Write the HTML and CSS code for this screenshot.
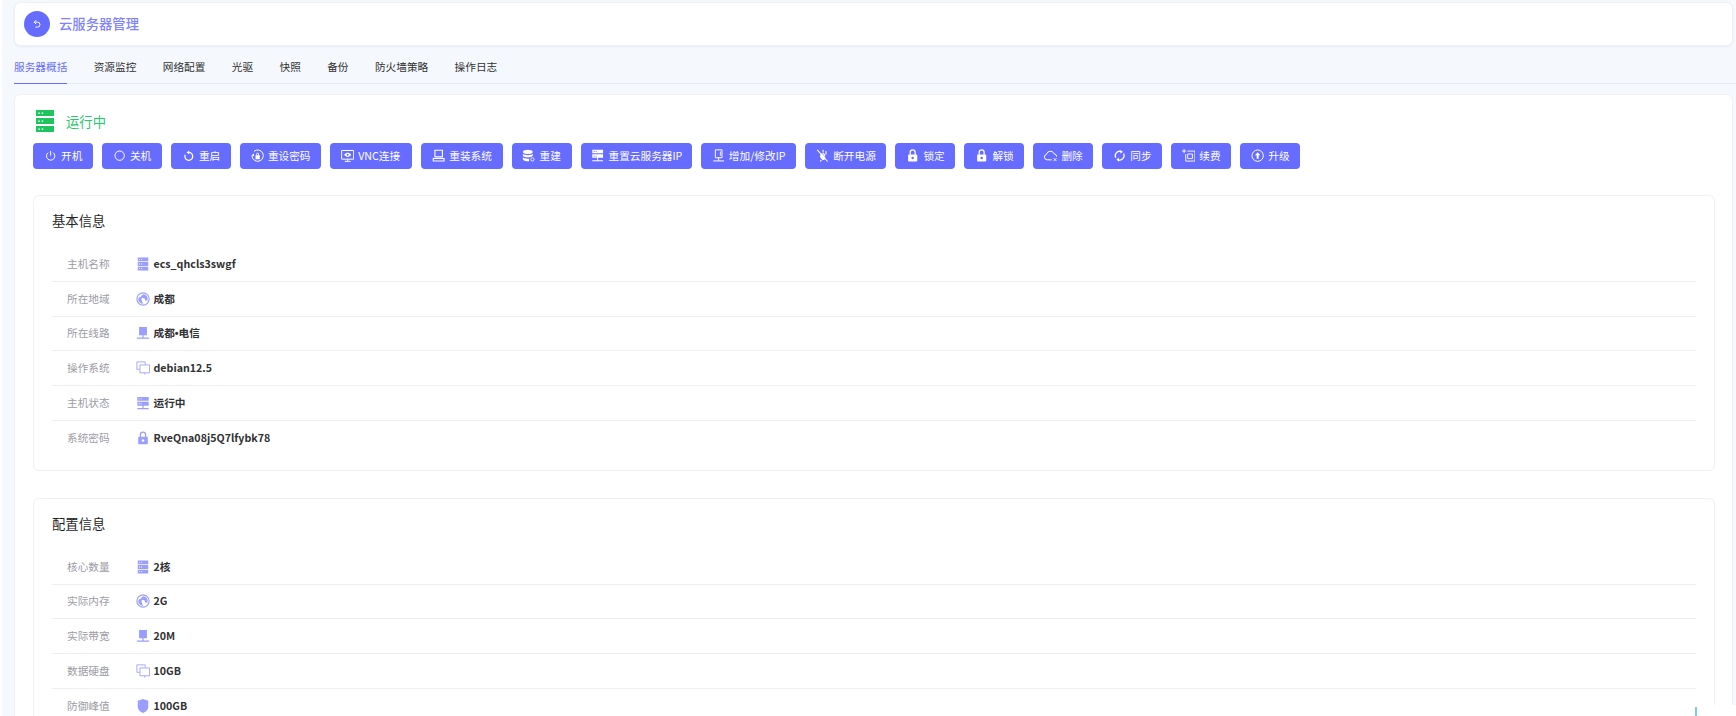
FILE: index.html
```html
<!DOCTYPE html>
<html lang="zh-CN">
<head>
    <meta charset="UTF-8">
    <meta name="viewport" content="width=device-width, initial-scale=1.0">
    <title>云服务器管理</title>
    <link rel="stylesheet" href="styles.css">
</head>
<body>
    <!-- icon sprite -->
    <svg class="sprite" xmlns="http://www.w3.org/2000/svg">
        <symbol id="i-back" viewBox="0 0 16 16"><path d="M6.5 2 3.5 5l3 3M3.5 5h5.2a4 4 0 0 1 0 8H5.5" fill="none" stroke="currentColor" stroke-width="1.6"/></symbol>
        <symbol id="i-power" viewBox="0 0 16 16"><path d="M5 4.4a5 5 0 1 0 6 0M8 2.4V8" fill="none" stroke="currentColor" stroke-width="1.2"/></symbol>
        <symbol id="i-circle" viewBox="0 0 16 16"><circle cx="8" cy="8" r="5.6" fill="none" stroke="currentColor" stroke-width="1.2"/></symbol>
        <symbol id="i-restart" viewBox="0 0 16 16"><path d="M8.4 4.2a4.7 4.7 0 1 1-4.5 2.7" fill="none" stroke="currentColor" stroke-width="1.5"/><path d="M8.6 1.8v4.6L5.4 4.2z" fill="currentColor"/></symbol>
        <symbol id="i-resetpw" viewBox="0 0 16 16"><path d="M3.6 2.8A6.8 6.8 0 1 1 1.2 8" fill="none" stroke="currentColor" stroke-width="1.2"/><path d="M.6 7.8 3.6 5.2v3.6z" fill="currentColor"/><path d="M5.4 7.5h5.2v4.7H5.4zM6.4 7.5V6a1.6 1.6 0 0 1 3.2 0v1.5h-.9V6a.7.7 0 0 0-1.4 0v1.5z" fill="currentColor"/></symbol>
        <symbol id="i-vnc" viewBox="0 0 16 16"><path d="M.8 1.8h14.400v10.400H.8zM8 12.200v2.400M4.500 14.800h7" fill="none" stroke="currentColor" stroke-width="1.2"/><path d="M3.800 7C5 5.200 6.400 4.500 8 4.500S11 5.200 12.200 7C11 8.800 9.600 9.500 8 9.500S5 8.800 3.800 7z" fill="currentColor"/><circle cx="8" cy="7" r="1.200" fill="#666cff"/></symbol>
        <symbol id="i-laptop" viewBox="0 0 16 16"><path d="M3.500 1.500h9v8h-9zM1.500 11.500h13v3h-13z" fill="none" stroke="currentColor" stroke-width="1.300"/></symbol>
        <symbol id="i-db" viewBox="0 0 16 16"><path d="M1 3.500C1 2 4 1 7 1s6 1 6 2.500S10 6 7 6 1 5 1 3.500zM1 5.700C2.200 7 4.500 7.400 7 7.400s4.800-.4 6-1.700v2.100C13 9 10 10 7 10S1 9 1 7.800zM1 10c1.200 1.300 3.500 1.700 6 1.700.5 0 1 0 1.500-.1v3.100L7 14.800c-3 0-6-1-6-2.500z" fill="currentColor"/><circle cx="12.500" cy="12.500" r="2" fill="none" stroke="currentColor" stroke-width="1"/></symbol>
        <symbol id="i-serverip" viewBox="0 0 16 16"><path d="M1.500 1h13v4.200h-13zM1.500 6.400h13v4.200h-13zM7.400 10.600h1.200v3h5.900v1.200h-13v-1.200h5.900z" fill="currentColor"/><path d="M3 2.600h1.400v1H3zM5.500 2.600h1.400v1H5.500zM3 8h1.400v1H3zM5.500 8h1.400v1H5.500z" fill="#666cff"/></symbol>
        <symbol id="i-addip" viewBox="0 0 16 16"><path d="M4 1h8v9.500H4zM8 10.500v3.300M1.500 14.300h13" fill="none" stroke="currentColor" stroke-width="1.200"/><path d="M9.500 3h1v5h-1z" fill="currentColor"/></symbol>
        <symbol id="i-unplug" viewBox="0 0 16 16"><path d="M5.500 5.500 4.800 10l3.400 3.400 3-1.200-.2-5.500-2-2z" fill="currentColor"/><path d="M1.500 1 14 15M8.500 .8v3.500M12 2.500v4M6.500 13 5 15" fill="none" stroke="currentColor" stroke-width="1.300"/><path d="M3 .2 15.700 14.800" stroke="#666cff" stroke-width=".7"/></symbol>
        <symbol id="i-lock" viewBox="0 0 16 16"><path fill-rule="evenodd" d="M3.500 6.500h9a1 1 0 0 1 1 1V14a1 1 0 0 1-1 1h-9a1 1 0 0 1-1-1V7.500a1 1 0 0 1 1-1zM8 9.300a1.500 1.500 0 1 0 0 3 1.500 1.500 0 0 0 0-3z" fill="currentColor"/><path d="M5 6.800V4.200a3 3 0 0 1 6 0v2.600" fill="none" stroke="currentColor" stroke-width="1.500"/></symbol>
        <symbol id="i-cloud" viewBox="0 0 16 16"><path d="M9.200 13H3.800A3.300 3.300 0 0 1 3 6.500 4.800 4.800 0 0 1 12.200 5.800a3.400 3.400 0 0 1 3 3.400" fill="none" stroke="currentColor" stroke-width="1.200"/><path d="m11.500 11 3.500 3.500m0-3.500-3.500 3.500" fill="none" stroke="currentColor" stroke-width="1.100"/></symbol>
        <symbol id="i-sync" viewBox="0 0 16 16"><path d="M3.300 10.500A5.300 5.300 0 0 1 9.600 3M12.700 5.500A5.300 5.300 0 0 1 6.400 13" fill="none" stroke="currentColor" stroke-width="1.500"/><path d="M8.800 .8 12 3.500 8.800 5.500zM7.200 10.500 4 12.500l3.200 2.700z" fill="currentColor"/></symbol>
        <symbol id="i-renew" viewBox="0 0 16 16"><path d="M6.500 2.500h9v12h-11V6M6.800 6h5.700v5.500H6.800zM2.500 0v5M0 2.500h5" fill="none" stroke="currentColor" stroke-width="1.100"/></symbol>
        <symbol id="i-up" viewBox="0 0 16 16"><circle cx="8" cy="8" r="6.800" fill="none" stroke="currentColor" stroke-width="1.200"/><path d="M8 3.800 11.200 7.600H9.200v4H6.800v-4H4.800z" fill="currentColor"/></symbol>

        <symbol id="r-server" viewBox="0 0 16 16"><path fill-rule="evenodd" d="M2 .5h12v4.300H2zM2 5.850h12v4.300H2zM2 11.200h12v4.300H2zM3.500 2.200v1h1.200v-1zM5.800 2.200v1H7v-1zM3.500 7.500v1h1.200v-1zM5.800 7.500v1H7v-1zM3.500 12.800v1h1.200v-1zM5.800 12.800v1H7v-1z" fill="currentColor"/></symbol>
        <symbol id="r-globe" viewBox="0 0 16 16"><circle cx="8" cy="8" r="7" fill="none" stroke="currentColor" stroke-width="1.300"/><path d="M8 2.600a5.400 5.400 0 0 1 5 7.400l-2.500-.4-.6-2.300-2.600-.8-1.300 1.600 1 2.500 1 3A5.400 5.400 0 0 1 3 6.200L5 5.800 6.800 3.600z" fill="currentColor"/></symbol>
        <symbol id="r-net" viewBox="0 0 16 16"><path d="M3.500 1h9v9.500h-9zM7.300 10.500h1.400v2.700H15v1.400H1v-1.400h6.300z" fill="currentColor"/></symbol>
        <symbol id="r-os" viewBox="0 0 16 16"><path d="M10.500 4V1H1v8.500h3" fill="none" stroke="currentColor" stroke-width="1"/><path d="M4.500 4.500h11v9h-11zM10 13.500v2" fill="none" stroke="currentColor" stroke-width="1"/></symbol>
        <symbol id="r-state" viewBox="0 0 16 16"><path fill-rule="evenodd" d="M1.500 1h13v4.500h-13zM1.500 6.600h13v4.500h-13zM7.300 11.100h1.400v2.500h5.800V15h-13v-1.400h5.800zM3 2.800v1h1.200v-1zM5.300 2.800v1h1.200v-1zM3 8.400v1h1.200v-1zM5.300 8.400v1h1.200v-1z" fill="currentColor"/></symbol>
        <symbol id="r-shield" viewBox="0 0 16 16"><path d="M8 0 14 2v6.500c0 3.500-2.600 6-6 7.500-3.400-1.500-6-4-6-7.500V2z" fill="currentColor"/></symbol>
    </svg>

    <div class="page">
        <div class="header">
            <span class="back"><svg class="back-icon"><use href="#i-back"/></svg></span>
            <span class="header-title">云服务器管理</span>
        </div>

        <div class="tabs">
            <a class="tab active">服务器概括</a>
            <a class="tab">资源监控</a>
            <a class="tab">网络配置</a>
            <a class="tab">光驱</a>
            <a class="tab">快照</a>
            <a class="tab">备份</a>
            <a class="tab">防火墙策略</a>
            <a class="tab">操作日志</a>
        </div>

        <div class="content">
            <div class="status">
                <svg class="status-icon" viewBox="0 0 16 22" preserveAspectRatio="none">
                    <path fill-rule="evenodd" d="M0 0h16v6H0zM0 8h16v6H0zM0 16h16v6H0zM2 2.400v1.400h1.400V2.400zM5 2.400v1.400h1.400V2.400zM2 10.400v1.400h1.400v-1.400zM5 10.400v1.400h1.400v-1.400zM2 18.400v1.400h1.400v-1.400zM5 18.400v1.400h1.400v-1.400z"/>
                </svg>
                <span class="status-text">运行中</span>
            </div>

            <div class="actions">
                <button class="btn"><svg><use href="#i-power"/></svg>开机</button>
                <button class="btn"><svg><use href="#i-circle"/></svg>关机</button>
                <button class="btn"><svg><use href="#i-restart"/></svg>重启</button>
                <button class="btn"><svg><use href="#i-resetpw"/></svg>重设密码</button>
                <button class="btn btn-vnc"><svg><use href="#i-vnc"/></svg>VNC连接</button>
                <button class="btn"><svg><use href="#i-laptop"/></svg>重装系统</button>
                <button class="btn"><svg><use href="#i-db"/></svg>重建</button>
                <button class="btn btn-ip"><svg><use href="#i-serverip"/></svg>重置云服务器IP</button>
                <button class="btn"><svg><use href="#i-addip"/></svg>增加/修改IP</button>
                <button class="btn"><svg><use href="#i-unplug"/></svg>断开电源</button>
                <button class="btn"><svg><use href="#i-lock"/></svg>锁定</button>
                <button class="btn"><svg><use href="#i-lock"/></svg>解锁</button>
                <button class="btn"><svg><use href="#i-cloud"/></svg>删除</button>
                <button class="btn"><svg><use href="#i-sync"/></svg>同步</button>
                <button class="btn"><svg><use href="#i-renew"/></svg>续费</button>
                <button class="btn"><svg><use href="#i-up"/></svg>升级</button>
            </div>

            <div class="section">
                <h3>基本信息</h3>
                <div class="row"><span class="label">主机名称</span><svg class="row-icon"><use href="#r-server"/></svg><span class="value">ecs_qhcls3swgf</span></div>
                <div class="row"><span class="label">所在地域</span><svg class="row-icon"><use href="#r-globe"/></svg><span class="value">成都</span></div>
                <div class="row"><span class="label">所在线路</span><svg class="row-icon"><use href="#r-net"/></svg><span class="value">成都<span class="dot">•</span>电信</span></div>
                <div class="row"><span class="label">操作系统</span><svg class="row-icon"><use href="#r-os"/></svg><span class="value">debian12.5</span></div>
                <div class="row"><span class="label">主机状态</span><svg class="row-icon"><use href="#r-state"/></svg><span class="value">运行中</span></div>
                <div class="row"><span class="label">系统密码</span><svg class="row-icon"><use href="#i-lock"/></svg><span class="value">RveQna08j5Q7lfybk78</span></div>
            </div>

            <div class="section">
                <h3>配置信息</h3>
                <div class="row"><span class="label">核心数量</span><svg class="row-icon"><use href="#r-server"/></svg><span class="value">2核</span></div>
                <div class="row"><span class="label">实际内存</span><svg class="row-icon"><use href="#r-globe"/></svg><span class="value">2G</span></div>
                <div class="row"><span class="label">实际带宽</span><svg class="row-icon"><use href="#r-net"/></svg><span class="value">20M</span></div>
                <div class="row"><span class="label">数据硬盘</span><svg class="row-icon"><use href="#r-os"/></svg><span class="value">10GB</span></div>
                <div class="row"><span class="label">防御峰值</span><svg class="row-icon"><use href="#r-shield"/></svg><span class="value">100GB</span></div>
            </div>
        </div>
    </div>

    <div class="corner"><span class="corner-bar"></span></div>
</body>
</html>
```

FILE: styles.css
```css
html, body {
    height: 100%;
    margin: 0;
    overflow: hidden;
}
body {
    font-family: "Noto Sans CJK SC", "Noto Sans", sans-serif;
    background-color: #fff;
    color: #303133;
}
.sprite {
    display: none;
}
.page {
    height: 100%;
    margin-left: 2px;
    padding-top: 2px;
    box-sizing: border-box;
    overflow: hidden;
    background-color: #f5f9fd;
}

/* header */
.header {
    display: flex;
    align-items: center;
    height: 44px;
    box-sizing: border-box;
    margin: 0 3px 0 12px;
    padding-left: 9px;
    background-color: #fff;
    border: 1px solid #eff0f6;
    border-radius: 6px;
    box-shadow: 0 1px 2px #e9ebf3;
}
.back {
    display: flex;
    align-items: center;
    justify-content: center;
    width: 26px;
    height: 26px;
    border-radius: 50%;
    background-color: #666cff;
    color: #fff;
}
.back-icon {
    width: 10px;
    height: 10px;
}
.header-title {
    margin-left: 9px;
    padding-bottom: 2px;
    font-size: 13.33px;
    font-weight: 500;
    color: #7f83ff;
}

/* tabs */
.tabs {
    display: flex;
    gap: 26.4px;
    height: 37px;
    margin-left: 12px;
    border-bottom: 1px solid #e8ecf2;
}
.tab {
    height: 23px;
    padding-top: 14px;
    font-size: 10.67px;
    line-height: 14px;
    color: #303133;
    cursor: pointer;
}
.tab.active {
    color: #666cff;
    border-bottom: 1px solid #666cff;
}

/* main card */
.content {
    margin: 10px 3px 0 12px;
    padding: 15px 17px 0 18px;
    min-height: 700px;
    background-color: #fff;
    border: 1px solid #eff0f6;
    border-radius: 6px;
}
.status {
    display: flex;
    align-items: center;
    height: 22px;
}
.status-icon {
    width: 18px;
    height: 22px;
    margin-left: 3px;
    fill: #1fc45f;
}
.status-text {
    margin-left: 12px;
    font-size: 13.33px;
    color: #27c96f;
}
.actions {
    display: flex;
    gap: 9px;
    margin-top: 11px;
}
.btn {
    display: flex;
    align-items: center;
    gap: 4px;
    height: 26px;
    padding: 0 10.67px 1px;
    font-family: inherit;
    font-size: 10.67px;
    color: #fff;
    background-color: #666cff;
    border: none;
    border-radius: 4px;
    cursor: pointer;
    white-space: nowrap;
}
.btn svg {
    width: 13.33px;
    height: 13.33px;
    flex-shrink: 0;
}
.btn-vnc {
    padding-right: 12.2px;
}
.btn-ip {
    padding-right: 9.5px;
}

/* info sections */
.section {
    margin-top: 26px;
    padding: 15px 18px 14px;
    background-color: #fff;
    border: 1px solid #eff0f6;
    border-radius: 6px;
}
.section + .section {
    margin-top: 27px;
}
.section h3 {
    margin: 0 0 16px;
    font-size: 13.33px;
    font-weight: 400;
    line-height: 20px;
    color: #1f1f24;
}
.row {
    display: flex;
    align-items: center;
    height: 34.8px;
    box-sizing: border-box;
    padding-left: 15px;
    border-bottom: 1px solid #eeeff5;
}
.row:last-child {
    border-bottom: none;
}
.label {
    width: 69px;
    padding-bottom: 1px;
    font-size: 10.67px;
    color: #9c9ca4;
}
.row-icon {
    width: 14px;
    height: 14px;
    margin-right: 3.5px;
    color: #9b9eff;
}
.value {
    padding-bottom: 1px;
    font-size: 10.67px;
    font-weight: 700;
    color: #303133;
}
.dot {
    font-family: "Liberation Sans", sans-serif;
}

/* piece of floating widget at the bottom right */
.corner {
    position: fixed;
    right: 0;
    bottom: 0;
    width: 76px;
    height: 11px;
    background-color: #fff;
}
.corner-bar {
    position: absolute;
    left: 35px;
    top: 2px;
    width: 2px;
    height: 9px;
    background-color: #7cc8fb;
}
```
